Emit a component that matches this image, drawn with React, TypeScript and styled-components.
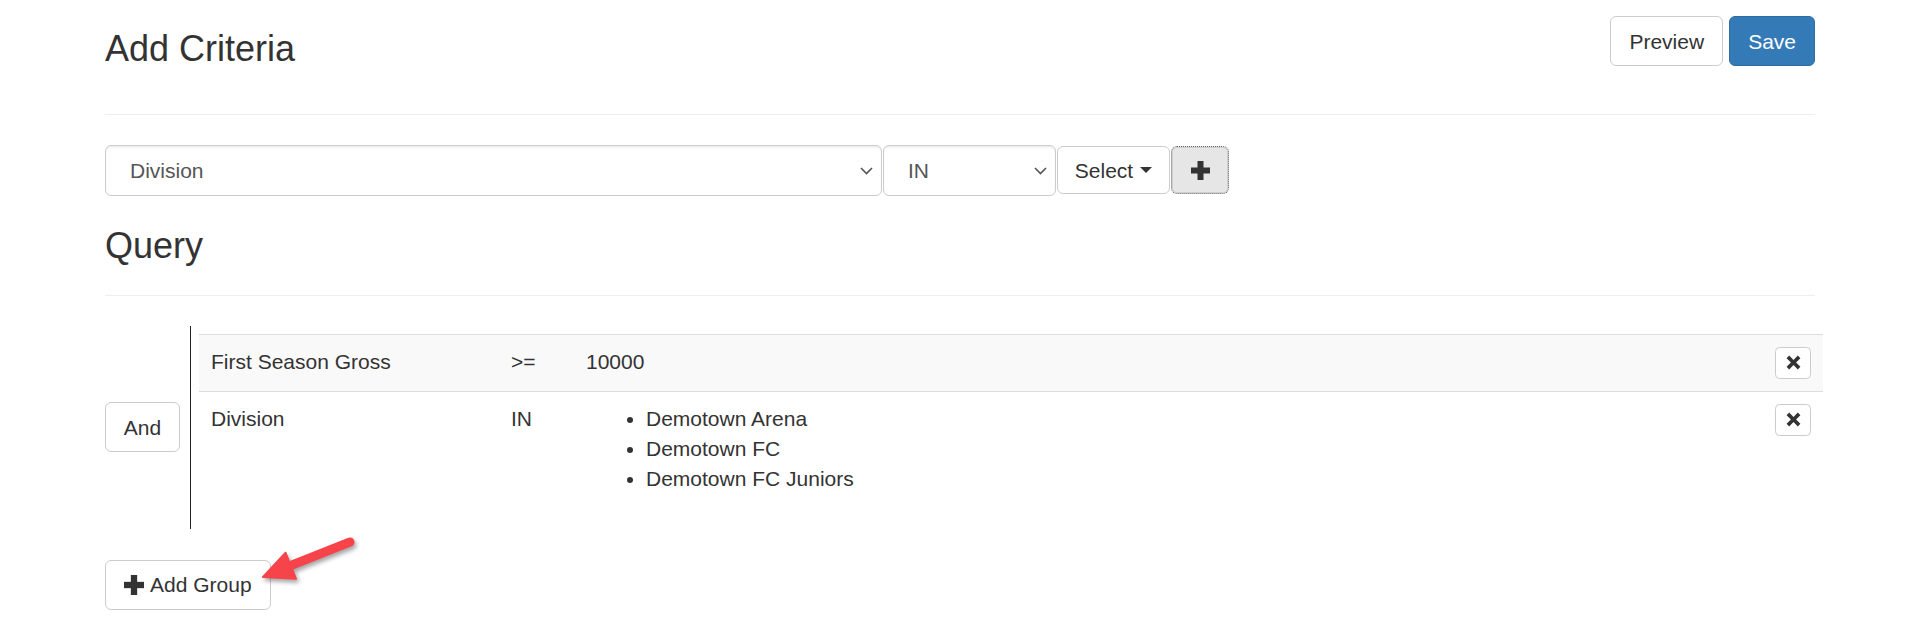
import React from "react";
import styled, { createGlobalStyle, css } from "styled-components";

const GlobalStyle = createGlobalStyle`
  html, body {
    margin: 0;
    padding: 0;
    background: #fff;
  }
  body {
    font-family: "Liberation Sans", Arial, Helvetica, sans-serif;
    font-size: 21px;
    line-height: 1.428571;
    color: #333;
  }
  * { box-sizing: border-box; }
`;

const Page = styled.div`
  padding: 0 105px;
`;

const Header = styled.header`
  display: flex;
  justify-content: space-between;
  align-items: flex-start;
  box-sizing: content-box;
  padding-top: 16px;
  height: 98px;
  border-bottom: 1px solid #eee;
`;

const Title = styled.h3`
  margin: 12.7px 0 0;
  font-size: 36px;
  font-weight: 500;
  line-height: 1.1;
  color: #333;
`;

const Actions = styled.div`
  display: flex;
  gap: 6px;
`;

const Button = styled.button<{ $primary?: boolean; $pressed?: boolean; $w?: number }>`
  display: inline-flex;
  align-items: center;
  justify-content: center;
  gap: 6px;
  height: 50px;
  padding: 0 18px;
  font-family: inherit;
  font-size: 21px;
  line-height: 1;
  color: #333;
  background: #fff;
  border: 1px solid #ccc;
  border-radius: 6px;
  cursor: pointer;
  white-space: nowrap;
  ${(p) => p.$w && css`width: ${p.$w}px; padding: 0;`}
  ${(p) =>
    p.$primary &&
    css`
      color: #fff;
      background: #337ab7;
      border-color: #2e6da4;
    `}
  ${(p) =>
    p.$pressed &&
    css`
      background: #e6e6e6;
      border: 1px dotted #666;
      box-shadow: inset 0 0 0 1px #cfcfcf;
    `}
`;

const CriteriaRow = styled.div`
  display: flex;
  align-items: flex-start;
  gap: 1px;
  margin-top: 30px;
`;

const FakeSelect = styled.div<{ $w: number }>`
  display: flex;
  align-items: center;
  justify-content: space-between;
  width: ${(p) => p.$w}px;
  height: 51px;
  padding: 0 8px 0 24px;
  border: 1px solid #ccc;
  border-radius: 6px;
  background: #fff;
  color: #555;
  font-size: 21px;
  box-shadow: inset 0 1.5px 1.5px rgba(0, 0, 0, 0.075);
`;

const RowButton = styled(Button)`
  height: 48px;
  margin-top: 1px;
`;

const Caret = styled.span`
  display: inline-block;
  width: 0;
  height: 0;
  margin-left: 1px;
  border-top: 6px solid #333;
  border-left: 6px solid transparent;
  border-right: 6px solid transparent;
`;

const SectionHeader = styled.div`
  margin-top: 30px;
  padding-bottom: 29px;
  border-bottom: 1px solid #eee;
`;

const SectionTitle = styled(Title)`
  margin: 0;
`;

const Group = styled.div`
  display: flex;
  align-items: center;
  margin-top: 30px;
  margin-right: -8px;
`;

const Rules = styled.div`
  flex: 1;
  margin-left: 10px;
  border-left: 1px solid #222;
  padding: 8px 0 8px 8px;
`;

const Table = styled.table`
  width: 100%;
  border-collapse: collapse;
  border-spacing: 0;
`;

const Row = styled.tr<{ $striped?: boolean }>`
  background: ${(p) => (p.$striped ? "#f9f9f9" : "transparent")};
`;

const Cell = styled.td<{ $w?: number; $right?: boolean }>`
  padding: 12px;
  border-top: 1px solid #ddd;
  vertical-align: top;
  line-height: 30px;
  ${(p) => p.$w && css`width: ${p.$w}px;`}
  ${(p) => p.$right && css`text-align: right;`}
`;

const ValueList = styled.ul`
  margin: 0 0 15px;
  padding-left: 60px;
  line-height: 30px;
`;

const RemoveButton = styled.button`
  display: inline-flex;
  align-items: center;
  justify-content: center;
  width: 36px;
  height: 32px;
  padding: 0;
  background: #fff;
  border: 1px solid #ccc;
  border-radius: 4.5px;
  cursor: pointer;
  vertical-align: top;
`;

const Footer = styled.div`
  position: relative;
  margin-top: 31px;
  padding-bottom: 23px;
`;

const Arrow = styled.svg`
  position: absolute;
  left: 140px;
  top: -34px;
  overflow: visible;
  filter: drop-shadow(2px 3px 2px rgba(0, 0, 0, 0.35));
  pointer-events: none;
`;

const Chevron = () => (
  <svg width="13" height="8" viewBox="0 0 13 8" fill="none">
    <path d="M1 1 L6.5 6.5 L12 1" stroke="#555" strokeWidth="1.6" />
  </svg>
);

const PlusIcon = ({ size = 19 }: { size?: number }) => (
  <svg width={size} height={size} viewBox="0 0 19 19">
    <rect x="6.5" y="0" width="6" height="19" fill="#333" />
    <rect x="0" y="6.5" width="19" height="6" fill="#333" />
  </svg>
);

const RemoveIcon = () => (
  <svg width="15" height="15" viewBox="0 0 15 15">
    <path
      d="M3.2 0.6 L7.5 4.9 L11.8 0.6 L14.4 3.2 L10.1 7.5 L14.4 11.8 L11.8 14.4 L7.5 10.1 L3.2 14.4 L0.6 11.8 L4.9 7.5 L0.6 3.2 Z"
      fill="#333"
    />
  </svg>
);

type Rule = { field: string; op: string; values: string[] | string };

const rules: Rule[] = [
  { field: "First Season Gross", op: ">=", values: "10000" },
  { field: "Division", op: "IN", values: ["Demotown Arena", "Demotown FC", "Demotown FC Juniors"] },
];

export default function App() {
  return (
    <>
      <GlobalStyle />
      <Page>
        <Header>
          <Title>Add Criteria</Title>
          <Actions>
            <Button>Preview</Button>
            <Button $primary>Save</Button>
          </Actions>
        </Header>

        <CriteriaRow>
          <FakeSelect $w={777}>
            <span>Division</span>
            <Chevron />
          </FakeSelect>
          <FakeSelect $w={173}>
            <span>IN</span>
            <Chevron />
          </FakeSelect>
          <RowButton $w={113}>
            Select <Caret />
          </RowButton>
          <RowButton $w={58} $pressed>
            <PlusIcon />
          </RowButton>
        </CriteriaRow>

        <SectionHeader>
          <SectionTitle>Query</SectionTitle>
        </SectionHeader>

        <Group>
          <Button $w={75}>And</Button>
          <Rules>
            <Table>
              <tbody>
                {rules.map((r, i) => (
                  <Row key={r.field} $striped={i % 2 === 0}>
                    <Cell $w={300}>{r.field}</Cell>
                    <Cell $w={75}>{r.op}</Cell>
                    <Cell>
                      {Array.isArray(r.values) ? (
                        <ValueList>
                          {r.values.map((v) => (
                            <li key={v}>{v}</li>
                          ))}
                        </ValueList>
                      ) : (
                        r.values
                      )}
                    </Cell>
                    <Cell $right>
                      <RemoveButton aria-label="Remove">
                        <RemoveIcon />
                      </RemoveButton>
                    </Cell>
                  </Row>
                ))}
              </tbody>
            </Table>
          </Rules>
        </Group>

        <Footer>
          <Button>
            <PlusIcon size={20} />
            Add Group
          </Button>
          <Arrow width="130" height="70" viewBox="0 0 130 70">
            <line x1="105" y1="16" x2="42" y2="41" stroke="#f7444b" strokeWidth="9" strokeLinecap="round" />
            <path d="M18 51 L40.6 26.8 L51 52.8 Z" fill="#f7444b" stroke="#f7444b" strokeWidth="2" strokeLinejoin="round" />
          </Arrow>
        </Footer>
      </Page>
    </>
  );
}
